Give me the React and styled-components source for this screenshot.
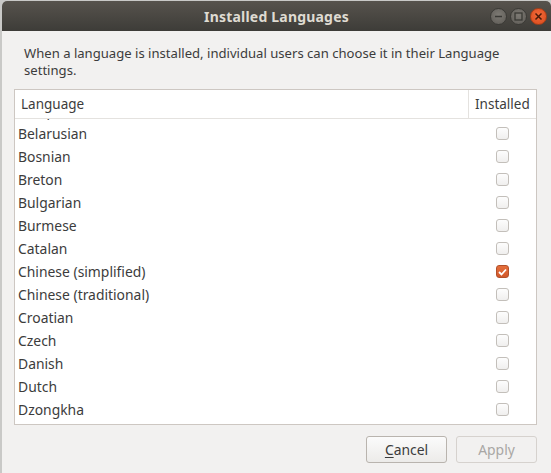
import React, { useLayoutEffect, useRef } from "react";
import styled, { createGlobalStyle } from "styled-components";

const languages = [
  ["Basque", false],
  ["Belarusian", false],
  ["Bosnian", false],
  ["Breton", false],
  ["Bulgarian", false],
  ["Burmese", false],
  ["Catalan", false],
  ["Chinese (simplified)", true],
  ["Chinese (traditional)", false],
  ["Croatian", false],
  ["Czech", false],
  ["Danish", false],
  ["Dutch", false],
  ["Dzongkha", false],
  ["English", false],
  ["Esperanto", false],
];

const GlobalStyle = createGlobalStyle`
  html, body {
    margin: 0;
    padding: 0;
    background: #c9c9c7;
    overflow: hidden;
  }
  * { box-sizing: border-box; }
`;

const Window = styled.div`
  margin: 1px 0 0 2px;
  width: 549px;
  height: 472px;
  display: flex;
  flex-direction: column;
  background: #f2f1f0;
  font-family: "Noto Sans", "DejaVu Sans", sans-serif;
  color: #3c3c3c;
  border-radius: 5px 5px 0 0;
  overflow: hidden;
`;

const TitleBar = styled.div`
  height: 30px;
  flex: none;
  display: flex;
  align-items: center;
  justify-content: center;
  position: relative;
  background: linear-gradient(#57534d, #3d3c38);
  color: #dfdbd2;
  font-weight: 700;
  font-size: 14px;
  letter-spacing: 0.2px;
`;

const Controls = styled.div`
  position: absolute;
  right: 4px;
  top: 7px;
  display: flex;
  gap: 3px;
`;

const Ctl = styled.div`
  width: 17px;
  height: 17px;
  border-radius: 50%;
  display: flex;
  align-items: center;
  justify-content: center;
  background: ${(p) =>
    p.$close
      ? "radial-gradient(circle at 50% 40%, #f26a3a, #d94a1c)"
      : "radial-gradient(circle at 50% 40%, #7d7a74, #5d5a55)"};
  border: 1px solid ${(p) => (p.$close ? "#a83e17" : "#3b3a36")};
`;

const Body = styled.div`
  flex: 1;
  display: flex;
  flex-direction: column;
  padding: 14px 14px 0 12px;
`;

const Intro = styled.p`
  margin: 0 0 10px 10px;
  font-size: 13.1px;
  line-height: 17px;
  color: #3c3c3c;
`;

const ListBox = styled.div`
  height: 336px;
  flex: none;
  border: 1px solid #cdc7c2;
  background: #fff;
  display: flex;
  flex-direction: column;
`;

const Header = styled.div`
  height: 29px;
  flex: none;
  display: flex;
  border-bottom: 1px solid #e4e2df;
  font-size: 13.5px;
`;

const HeadCell = styled.div`
  display: flex;
  align-items: center;
  padding: 0 6px;
  ${(p) => (p.$grow ? "flex: 1;" : "width: 68px; border-left: 1px solid #e4e2df;")}
`;

const Rows = styled.div`
  flex: 1;
  overflow: hidden;
`;

const Row = styled.div`
  height: 23px;
  display: flex;
  align-items: center;
  font-size: 13.9px;
`;

const Name = styled.div`
  flex: 1;
  padding-left: 3px;
`;

const CheckCell = styled.div`
  width: 68px;
  display: flex;
  justify-content: center;
  padding-left: 1px;
`;

const Box = styled.div`
  width: 13px;
  height: 13px;
  border-radius: 3px;
  display: flex;
  align-items: center;
  justify-content: center;
  border: 1px solid ${(p) => (p.$on ? "#b2502a" : "#c3bfba")};
  background: ${(p) => (p.$on ? "linear-gradient(#e56f3c, #d2582a)" : "linear-gradient(#fdfdfd, #f0efee)")};
`;

const Footer = styled.div`
  display: flex;
  justify-content: flex-end;
  gap: 9px;
  padding: 11px 0 0;
`;

const Button = styled.button`
  width: 81px;
  height: 27px;
  border-radius: 3px;
  font-family: "Noto Sans", "DejaVu Sans", sans-serif;
  font-size: 13.9px;
  color: ${(p) => (p.disabled ? "#a9a7a4" : "#3c3c3c")};
  border: 1px solid ${(p) => (p.disabled ? "#d6d2ce" : "#b9b4ae")};
  background: ${(p) => (p.disabled ? "#f2f1f0" : "linear-gradient(#fbfbfb, #ecebe9)")};
  padding: 0;
  u { text-decoration-thickness: 1px; text-underline-offset: 2px; }
`;

export default function App() {
  const rowsRef = useRef(null);
  useLayoutEffect(() => {
    if (rowsRef.current) rowsRef.current.scrollTop = 20;
  }, []);
  return (
    <>
      <GlobalStyle />
      <Window>
        <TitleBar>
          Installed Languages
          <Controls>
            <Ctl>
              <svg width="9" height="9" viewBox="0 0 9 9">
                <line x1="1" y1="4.5" x2="8" y2="4.5" stroke="#3a3935" strokeWidth="1.4" />
              </svg>
            </Ctl>
            <Ctl>
              <svg width="9" height="9" viewBox="0 0 9 9">
                <rect x="1" y="1" width="7" height="7" fill="none" stroke="#3a3935" strokeWidth="1.3" />
              </svg>
            </Ctl>
            <Ctl $close>
              <svg width="9" height="9" viewBox="0 0 9 9">
                <path d="M1.5 1.5 L7.5 7.5 M7.5 1.5 L1.5 7.5" stroke="#4a1a08" strokeWidth="1.5" />
              </svg>
            </Ctl>
          </Controls>
        </TitleBar>
        <Body>
          <Intro>
            When a language is installed, individual users can choose it in their Language
            <br />
            settings.
          </Intro>
          <ListBox>
            <Header>
              <HeadCell $grow>Language</HeadCell>
              <HeadCell>Installed</HeadCell>
            </Header>
            <Rows ref={rowsRef}>
              {languages.map(([name, on]) => (
                <Row key={name}>
                  <Name>{name}</Name>
                  <CheckCell>
                    <Box $on={on}>
                      {on && (
                        <svg width="9" height="8" viewBox="0 0 9 8">
                          <path d="M1 4 L3.5 6.5 L8 1.5" fill="none" stroke="#fff" strokeWidth="1.8" />
                        </svg>
                      )}
                    </Box>
                  </CheckCell>
                </Row>
              ))}
            </Rows>
          </ListBox>
          <Footer>
            <Button>
              <u>C</u>ancel
            </Button>
            <Button disabled>Apply</Button>
          </Footer>
        </Body>
      </Window>
    </>
  );
}
